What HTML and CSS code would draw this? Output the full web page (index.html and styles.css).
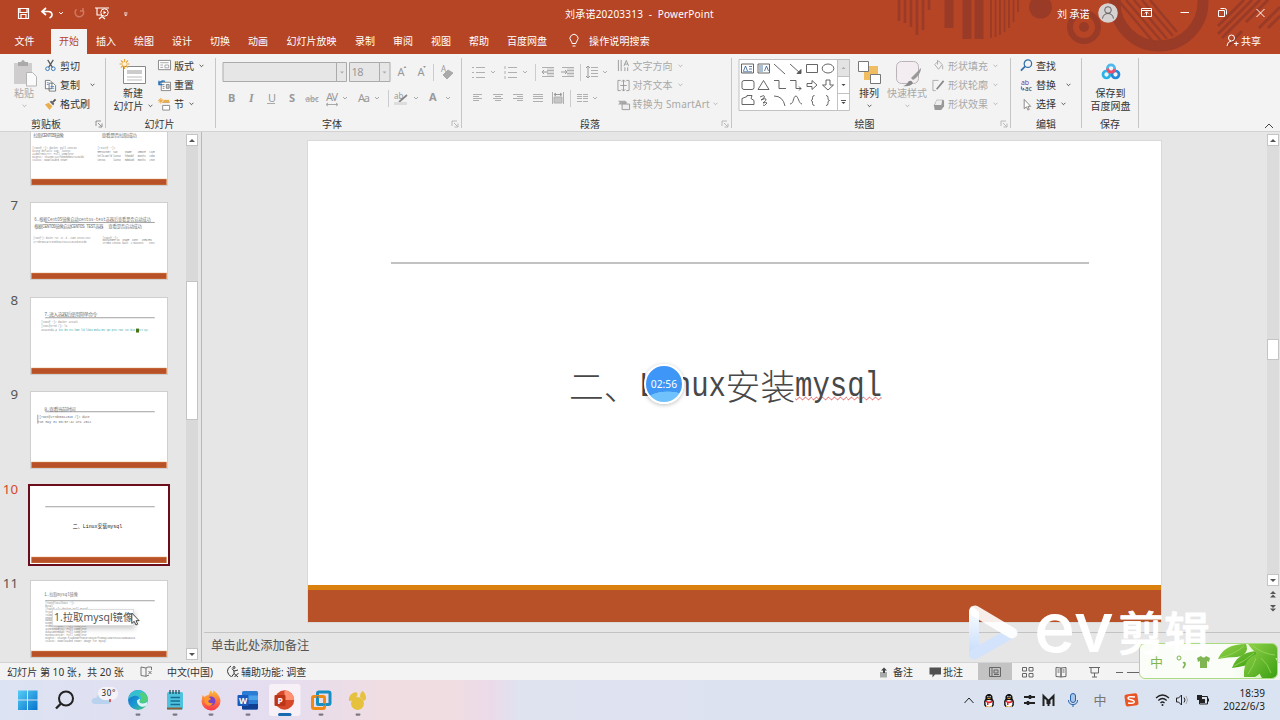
FILE: index.html
```html
<!DOCTYPE html>
<html lang="zh-CN">
<head>
<meta charset="utf-8">
<title>刘承诺20203313 - PowerPoint</title>
<link rel="stylesheet" href="styles.css">
</head>
<body>
<svg class="defs" width="0" height="0">
  <symbol id="chev" viewBox="0 0 5 4"><path d="M.6 .8 2.5 2.7 4.4 .8" fill="none" stroke="currentColor" stroke-width=".8"/></symbol>
  <symbol id="launch" viewBox="0 0 8 8"><path d="M1 6V1h5M3 3l3.500 3.500M7 3.500V7H3.500" fill="none" stroke="currentColor" stroke-width=".8"/></symbol>
  <symbol id="qq" viewBox="0 0 12 14"><path d="M1 9C1 7 2 6.500 2.500 5 2 2 4 .5 6 .5S10 2 9.500 5C10 6.500 11 7 11 9l-1 1-8 0z" fill="#111"/><ellipse cx="6" cy="9.800" rx="3.600" ry="3.300" fill="#fff"/><path d="M2 9.500q-.8 2 1 3.500M10 9.500q.8 2-1 3.500" stroke="#111" stroke-width="1.500" fill="none"/><path d="M2.500 7q3.500 1.800 7 0v1.700q-2 1.200-4 .9v2H4V9q-1-.2-1.500-.6z" fill="#d9252b"/><ellipse cx="6" cy="5" rx="1.800" ry=".6" fill="#f0a020"/><path d="M3 13.200h2.500M6.500 13.200H9" stroke="#e89a20" stroke-width="1"/><circle cx="4.900" cy="3.200" r=".7" fill="#fff"/><circle cx="7.100" cy="3.200" r=".7" fill="#fff"/></symbol>
</svg>
<div class="app">
  <header class="top">
    <svg class="decor" width="400" height="54" viewBox="880 0 400 54">
      <g stroke="#993b26" fill="none">
        <path d="M899 0v21M905 0v23M911 0v27M917 0v35M923 0v30M929 0v10" stroke-width="2.500"/>
        <path d="M949 0v28M967 0v39M979 0v39" stroke-width="9"/>
        <path d="M991 0v38M995.500 0v37M1000 0v35M1004.500 0v32M1009 0v28M1013.500 0v22M1018 0v12" stroke-width="1.800"/>
        <circle cx="1084" cy="27" r="14" stroke-width="6"/>
        <circle cx="1159" cy="2" r="44" stroke-width="11"/>
        <path d="M1118 0l38 45M1126 0l36 42M1134 0l33 39M1142 0l31 36M1150 0l27 32" stroke-width="2.500"/>
        <path d="M1218 26 1244 0M1218 34 1252 0M1222 38 1260 0M1246 22 1268 0M1228 46 1242 31M1259 28 1280 7M1268 28 1280 16" stroke-width="3"/>
      </g>
      <circle cx="1040.500" cy="7" r="11.500" fill="#993b26"/><circle cx="1084" cy="27" r="5" fill="#993b26"/>
    </svg>
    <div class="titlebar">
      <svg class="quick" width="150" height="27" viewBox="0 0 150 27" fill="none" stroke="#fff">
        <path d="M18.500 8.500h10v10h-10zM20 8.500v4h7v-4M21 18.500v-4h5v4" stroke-width="1.200"/>
        <path d="M46 8l-4 3.500 4 3.500M42 11.500h6q4 0 4 3.500 0 2-2.500 3" stroke-width="1.700"/>
        <path d="M59 12l2 2 2-2" stroke-width=".9"/>
        <path d="M82.500 9.500a4.300 4.300 0 1 1-6-.2M83 8v3h-3" stroke="#d07a64" stroke-width="1.400"/>
        <path d="M95 8h14M97 8v7h5M102 15v2M99 19l3-2.500 3 2.500" stroke-width="1.100"/><circle cx="104.500" cy="12.500" r="3.700"/><path d="M103.500 10.800v3.400l2.700-1.700z" fill="#fff" stroke="none"/>
        <path d="M124 13h3.500" stroke-width=".9"/><path d="M124 14.500h3.500l-1.750 1.800z" fill="#fff" stroke="none"/>
      </svg>
      <div class="wintitle">刘承诺20203313&nbsp; -&nbsp; PowerPoint</div>
      <div class="user">刘 承诺</div>
      <svg class="winbtns" width="190" height="27" viewBox="1090 0 190 27" fill="none" stroke="#fff">
        <circle cx="1108" cy="13" r="9.800" fill="#d5d2d1" stroke="none"/><circle cx="1108" cy="10" r="3.300" stroke="#665f5d"/><path d="M1102.500 18.500q1-5 5.500-5t5.500 5" stroke="#665f5d"/>
        <path d="M1141.500 8.500h10v8h-10zM1141.500 10.500h10M1146.500 15.500v-3.500M1144.800 13.500l1.700-1.700 1.700 1.700M1180.500 12.500h8.500"/>
        <path d="M1218.500 10.500h6v6h-6zM1220.500 8.500h4q2 0 2 2v4M1256.500 9l8 8M1264.500 9l-8 8"/>
      </svg>
    </div>
    <nav class="tabs">
      <span class="tab file">文件</span><span class="tab on">开始</span><span class="tab">插入</span><span class="tab">绘图</span><span class="tab">设计</span><span class="tab">切换</span><span class="tab">动画</span><span class="tab w5">幻灯片放映</span><span class="tab">录制</span><span class="tab">审阅</span><span class="tab">视图</span><span class="tab">帮助</span><span class="tab w4">百度网盘</span>
      <svg class="bulb" width="12" height="15" viewBox="0 0 12 15" fill="none" stroke="#fff"><path d="M4 10.500Q4 9 3 8a4 4 0 1 1 6 0q-1 1-1 2.500zM4.500 13h3"/></svg>
      <span class="tell">操作说明搜索</span>
      <span class="share"><svg width="13" height="13" viewBox="0 0 13 13" fill="none" stroke="#fff"><circle cx="5.500" cy="4" r="3"/><path d="M1 12q.5-4.500 4-5M8 9.500h4.500M10.200 7.500v4.500"/></svg>共享</span>
    </nav>
  </header>

  <section class="ribbon">
    <div class="group g1">
      <div class="body">
        <div class="big off"><svg width="26" height="28" viewBox="0 0 26 28"><path d="M3 4h18v21H3z" fill="#cfcdcd"/><path d="M7 3h3q2-4 4 0h3v4H7z" fill="#aaa"/><path d="M15.500 13.500h6l4 4V27h-10z" fill="#fafafa" stroke="#b5b5b5"/></svg><b>粘贴</b><svg class="c"><use href="#chev"/></svg></div>
        <div class="rows">
          <div class="r"><svg class="i" viewBox="0 0 14 14" fill="none"><path d="M4 1l5 8M10 1L5 9" stroke="#555" stroke-width="1.300"/><circle cx="3.800" cy="10.500" r="2" stroke="#2f75b5"/><circle cx="10" cy="10.500" r="2" stroke="#2f75b5"/></svg>剪切</div>
          <div class="r"><svg class="i" viewBox="0 0 14 14" fill="#fff" stroke="#666" stroke-width=".9"><path d="M1.500 1.500h5l2 2v7h-7zM5.500 4.500h4.500l2.500 2.500v6h-7z"/><path d="M7 8h4M7 10h4M3 4h2M3 6h2" stroke="#4b83bd"/></svg>复制<svg class="c far"><use href="#chev"/></svg></div>
          <div class="r"><svg class="i" viewBox="0 0 14 14"><path d="M1 7l4-2 4 4-3 4z" fill="#e9ad4a"/><path d="M6 4l2-1 3 3-1 2z" fill="#666"/><path d="M9.500 4.500L12.500 1.500" stroke="#555" stroke-width="2"/></svg>格式刷</div>
        </div>
      </div>
      <div class="label"><span>剪贴板</span><svg class="l"><use href="#launch"/></svg></div>
    </div>
    <div class="group g2">
      <div class="body">
        <div class="big"><svg width="28" height="28" viewBox="0 0 28 28"><path d="M4.500 7.500h22v17h-22z" fill="#fff" stroke="#888"/><path d="M8 11h15v4H8z" fill="#ccc"/><path d="M8 18h15M8 21h15" stroke="#bbb"/><path d="M5.500 0v10M.5 5h10M2 1.500l7 7M9 1.500l-7 7" stroke="#eaa63c" stroke-width="1.200"/><circle cx="5.500" cy="5" r="2" fill="#fff4d4"/></svg><b>新建</b><b class="two">幻灯片 <svg class="c"><use href="#chev"/></svg></b></div>
        <div class="rows">
          <div class="r"><svg class="i" viewBox="0 0 14 14" fill="#fff" stroke="#777" stroke-width=".9"><path d="M.5 1.500h13v10H.5z"/><path d="M2.500 4h9M2.500 6.500h3M2.500 9h3M7.500 6.500h4v3h-4z" stroke="#999"/></svg>版式<svg class="c"><use href="#chev"/></svg></div>
          <div class="r"><svg class="i" viewBox="0 0 14 14" fill="#fff" stroke="#777" stroke-width=".9"><path d="M3.500 3.500h10v9h-10z"/><path d="M9 6h3v4H9z" fill="#ccc"/><path d="M5 6h2M5 8h2M5 10h2"/><path d="M1 2v4h4M1.300 5.500Q3 1 7.500 2.500" fill="none" stroke="#2f75b5" stroke-width="1.500"/></svg>重置</div>
          <div class="r"><svg class="i" viewBox="0 0 14 14"><path d="M5 4.500h7.500M5 8h7.500v5H5z" fill="#fff" stroke="#888"/><path d="M6 2h6v3H6z" fill="#e9ad4a"/><path d="M3 0v6M0 3h6M1 1l4 4M5 1L1 5" stroke="#eda63c"/></svg>节<svg class="c"><use href="#chev"/></svg></div>
        </div>
      </div>
      <div class="label"><span>幻灯片</span><i></i></div>
    </div>
    <div class="group g3">
      <div class="body col">
        <svg width="245" height="62" viewBox="216 54 245 62" fill="none" stroke="#a9a9a9">
          <path d="M223 62.500h123.500v19H223zM336.500 62.500v19M349.500 62.500h40.500v19h-40.500zM379.500 62.500v19" fill="#e6e6e6" stroke="#ababab"/>
          <path d="M340 71.500h4l-2 2zM382.500 71.500h4l-2 2z" fill="#aaa" stroke="none"/>
          <g stroke="none" fill="#999" class="tx">
            <text x="351.500" y="76" textLength="12">18</text><text x="397.500" y="76">A</text><text x="417.500" y="76">A</text><text x="441" y="72" class="sm">A</text>
            <text x="228" y="102" class="bd">B</text><text x="249" y="102" class="it">I</text><text x="268" y="102">U</text><text x="289" y="102" class="bd">S</text><text x="305.500" y="102" class="sm">abc</text><text x="326" y="101" textLength="12">AV</text><text x="358" y="102" textLength="12">Aa</text><text x="394" y="99" class="sm">ab</text><text x="429" y="101" class="bd">A</text>
          </g>
          <path d="M403.500 68l1.500-2 1.500 2zM423 66h3l-1.500 2z" fill="#999" stroke="none"/>
          <path d="M433.500 64v17M388.500 90v17" stroke="#ccc"/>
          <path d="M443 75l5-5 5 3-6 6z" fill="#aaa"/>
          <path d="M267 103.500h8M305 99h13M326 104.500h12M328 103l-2 1.500 2 1.500M336 103l2 1.500-2 1.500"/><path d="M399 102l8-7" stroke="#888" stroke-width="1.700"/><path d="M394 102h13v3h-13z" fill="#ddd" stroke="none"/>
          <path d="M343 97l2 2 2-2M375 97l2 2 2-2M414 97l2 2 2-2M446 97l2 2 2-2"/>
        </svg>
      </div>
      <div class="label"><span>字体</span><svg class="l off"><use href="#launch"/></svg></div>
    </div>
    <div class="group g4">
      <div class="body">
        <svg width="153" height="62" viewBox="462 54 153 62" fill="none" stroke="#b0b0b0">
          <path d="M476 67.500h9M476 72.500h9M476 77.500h9M472 67.500h2M472 72.500h2M472 77.500h2M508 67.500h9M508 72.500h9M508 77.500h9M505 66v3M505 71v3M505 76v3"/>
          <path d="M491 71l2 2 2-2M523 71l2 2 2-2M603 71l2 2 2-2M593 97l2 2 2-2"/>
          <path d="M535.500 64v17M580.500 64v17M570.500 90v17" stroke="#ccc"/>
          <path d="M547 67h7v10h-7zM567 67h7v10h-7z" fill="#ddd" stroke="none"/>
          <path d="M542 67.500h12M547 70.500h7M547 73.500h7M542 76.500h12M562 67.500h12M567 70.500h7M567 73.500h7M562 76.500h12M591 67.500h7M591 70.500h7M591 73.500h7M591 76.500h7"/>
          <path d="M548 72h-6M544 70l-2 2 2 2M561 72h6M565 70l2 2-2 2M588 66v12M586 68l2-2 2 2M586 76l2 2 2-2" stroke="#999"/>
          <path d="M473 94.500h9M473 96.500h6M473 98.500h9M473 100.500h6M493 94.500h10M495 96.500h6M493 98.500h10M495 100.500h6M513 94.500h10M517 96.500h6M513 98.500h10M517 100.500h6M533 94.500h10M533 96.500h10M533 98.500h10M533 101.500h10M577 94.500h5M577 96.500h5M577 98.500h5M577 101.500h5M583 94.500h5M583 96.500h5M583 98.500h5M583 101.500h5"/>
          <path d="M552.500 92v12M563.500 92v12" /><path d="M554 97h8v6h-8z" fill="#c6c6c6"/><path d="M554 94.500h8M556 93l-2 1.500 2 1.500M560 93l2 1.500-2 1.500" stroke="#999"/>
        </svg>
        <div class="rows off">
          <div class="r"><svg class="i" viewBox="0 0 14 14" fill="none" stroke="#999"><path d="M1.500 1v12M4.500 1v12M8.500 9v4M11.500 9v4M7.500 7.500l2.500-6 2.500 6M8.500 5.500h3"/></svg>文字方向<svg class="c"><use href="#chev"/></svg></div>
          <div class="r"><svg class="i" viewBox="0 0 14 14" fill="none" stroke="#999"><path d="M4 1.500H1v11h3M10 1.500h3v11h-3M3.500 7h7M7 1v12M5 3l2-2 2 2M5 11l2 2 2-2"/></svg>对齐文本<svg class="c"><use href="#chev"/></svg></div>
          <div class="r"><svg class="i" viewBox="0 0 14 14"><path d="M1 3h8l2 2-2 2H1l2-2z" fill="#aaa"/><path d="M5.500 6.500h8v6h-8z" fill="#eee" stroke="#999"/></svg><span class="smart">转换为 SmartArt</span><svg class="c near"><use href="#chev"/></svg></div>
        </div>
      </div>
      <div class="label"><span>段落</span><svg class="l off"><use href="#launch"/></svg></div>
    </div>
    <div class="group g5">
      <div class="body">
        <svg width="118" height="62" viewBox="732 54 118 62" fill="none" stroke="#555" stroke-width=".9">
          <path d="M739 59.500h110.500v51H739z" fill="#fff" stroke="#bbb"/><path d="M837.500 59.500h12v17h-12zM837.500 93.500h12" fill="#e3e3e3" stroke="#bbb"/><path d="M837.500 76v34" stroke="#bbb"/>
          <path d="M841.500 69h4l-2-2z" fill="#aaa" stroke="none"/><path d="M841.500 84h4l-2 2zM841.500 102h4l-2 2z" fill="#444" stroke="none"/><path d="M841 100.500h5" stroke="#444"/>
          <path d="M741.500 64h12v9h-12zM758 64h11.500v9H758zM774 64l11 10M790 64l10 9M806.500 64.500h11v8h-11z"/><path d="M797 73.500h4v-4z" fill="#555"/>
          <path d="M743.500 71l2-5 2 5M749 66.500h3M749 69h3M743 71.800h9M760 65v7M762 65v7M764.500 71l2-5 2 5" stroke="#315d8e" stroke-width=".8"/>
          <ellipse cx="828" cy="68.500" rx="5.800" ry="4.500"/><rect x="742" y="80.500" width="12" height="9" rx="2"/>
          <path d="M758 89.500l5.500-9 5.500 9zM774 80.500h5v8h7M790 80.500h6v8h5M799 86.500l2 2-2 2M807 83.500h5v-3l5 4.500-5 4.500v-3h-5zM826 80v5h-3.500l5.500 5 5.500-5H830v-5z"/>
          <path d="M742 104.500v-6l5-2v-1h5l-1 3 3 2v4zM760 97q6-3 4 1l-3 2q4-2 5-1t-3 4q3-1 4 0-3 4-4 2M774 96q9 0 11 10M790 104c4 0 3-8 6-8 2 0 3 8 6 8"/>
          <path d="M814.500 95.500q-2 0-2 2v2l-1.500 1 1.500 1v2q0 2 2 2M826 95.500q2 0 2 2v2l1.500 1-1.500 1v2q0 2-2 2"/>
        </svg>
        <div class="big arr"><svg width="26" height="28" viewBox="0 0 26 28"><path d="M8 7h14v14H8z" fill="#f0be60"/><path d="M2.500 2.500h10v10h-10zM14.500 15.500h10v9h-10z" fill="#fff" stroke="#777"/></svg><b>排列</b><svg class="c"><use href="#chev"/></svg></div>
        <div class="big off qs"><svg width="28" height="28" viewBox="0 0 28 28"><rect x="3.500" y="2.500" width="22" height="22" rx="5" fill="#f3ecf1" stroke="#bcb3ba"/><path d="M28 9l-10 10 2 2q7-4 8-11z" fill="#999"/><path d="M10 27q4-1 5-4 3-3 5 1-3 4-10 3" fill="#888"/></svg><b>快速样式</b><svg class="c"><use href="#chev"/></svg></div>
        <div class="rows off">
          <div class="r"><svg class="i" viewBox="0 0 14 14" fill="none" stroke="#aaa"><path d="M3 6l4-4 4 4-4 5zM6 1v5M11.500 7v4" /></svg>形状填充<svg class="c"><use href="#chev"/></svg></div>
          <div class="r"><svg class="i" viewBox="0 0 14 14" fill="none" stroke="#aaa"><path d="M7 1.500H1v11h3"/><path d="M5 11l7.500-9" stroke="#888" stroke-width="1.800"/></svg>形状轮廓<svg class="c"><use href="#chev"/></svg></div>
          <div class="r"><svg class="i" viewBox="0 0 14 14"><path d="M2 8l3-6h7l1 1v6l-3 4H3z" fill="#999"/><path d="M5 2.500h6l-1 5H3z" fill="#eee"/></svg>形状效果<svg class="c"><use href="#chev"/></svg></div>
        </div>
      </div>
      <div class="label"><span>绘图</span><svg class="l off"><use href="#launch"/></svg></div>
    </div>
    <div class="group g6">
      <div class="body"><div class="rows">
        <div class="r"><svg class="i" viewBox="0 0 14 14" fill="none" stroke="#2f6da8"><circle cx="8.500" cy="5" r="4" stroke-width="1.300"/><path d="M5.500 8L1 12.500" stroke-width="1.800"/></svg>查找</div>
        <div class="r"><svg class="i" viewBox="0 0 14 14"><text x="1" y="6" font-size="7.500" fill="#7b3f98">ab</text><text x="5.500" y="12.500" font-size="7" fill="#333">ac</text><path d="M1.500 8v3h3M3 9.500L4.500 11 3 12.500" fill="none" stroke="#2f6da8"/></svg>替换<svg class="c far"><use href="#chev"/></svg></div>
        <div class="r"><svg class="i" viewBox="0 0 14 14"><path d="M4.500 1.500v10L7 9.500l1.500 3.500 1.500-.7L8.500 9h3z" fill="#fff" stroke="#777" stroke-width=".9"/></svg>选择<svg class="c"><use href="#chev"/></svg></div>
      </div></div>
      <div class="label"><span>编辑</span><i></i></div>
    </div>
    <div class="group g7">
      <div class="body"><div class="big"><svg width="20" height="28" viewBox="0 0 20 28" fill="none" stroke-width="2.700"><circle cx="5.500" cy="15.500" r="3.500" stroke="#29b4e8"/><circle cx="14.500" cy="15.500" r="3.500" stroke="#2388d9"/><circle cx="10" cy="9.500" r="3.700" stroke="#4eb9ec"/><path d="M6.500 9.500Q7 13 10 13.200T13.500 10" stroke="#ef4d67"/></svg><b>保存到</b><b class="two">百度网盘</b></div></div>
      <div class="label"><span>保存</span><i></i></div>
    </div>
    <svg class="fold" width="10" height="6" viewBox="0 0 10 6"><path d="M1 5l4-4 4 4" fill="none" stroke="#444"/></svg>
  </section>

  <main class="work">
    <aside class="panel">
      <div class="thumbs">
        <div class="t"><span></span><svg class="s" viewBox="0 0 137 77"><g class="sim"><text x="2" y="28" font-size="5" textLength="31">拉取CENTOS镜像</text><text x="71" y="28" font-size="5" textLength="36">查看是否拉取成功</text></g><g class="mono"><text x="1" y="41">[root@ ~]# docker pull centos</text><text x="1" y="44">Using default tag: latest</text><text x="1" y="47">a1d0c7532777: Pull complete</text><text x="1" y="50" textLength="52">Digest: sha256:a27fd8080b517143cbb</text><text x="1" y="53" textLength="36">Status: Downloaded newer</text><text x="67" y="41" textLength="18">[root@ ~]#</text><text x="67" y="45" textLength="58">REPOSITORY  TAG      IMAGE     CREATE   SIZE</text><text x="67" y="49" textLength="58">hello-world latest   feb5d9f   months   13kB</text><text x="67" y="53" textLength="58">centos      latest   5d0da3d   months   231M</text></g><path class="bar" d="M0 71h137v6H0z"/></svg></div>
        <div class="t"><span>7</span><svg class="s" viewBox="0 0 137 77"><g class="sim"><text x="3" y="18" font-size="5" textLength="118" lengthAdjust="spacingAndGlyphs">6.根据CentOS镜像启动centos-test容器后查看是否启动成功</text><text x="3" y="25.500" font-size="4.500" textLength="70">根据CENTOS镜像启动CENTOS TEST容器</text><text x="78" y="25.500" font-size="4.500" textLength="34">查看是否启动成功</text></g><path d="M14 19.700h111" class="ln"/><g class="mono"><text x="2" y="36.500" textLength="58" lengthAdjust="spacingAndGlyphs">[root@~]# docker run -it -d --name centos-test</text><text x="2" y="41" textLength="54">277de6619723ed3847ea2c1028b81ed6</text><text x="72" y="36">[root@ ~]#</text><text x="72" y="39" textLength="50">CONTAINER ID  IMAGE  COMM   CREATED</text><text x="72" y="42" textLength="53">277d66 centos bash  2 minutes    cent</text></g><path class="bar" d="M0 71h137v6H0z"/></svg></div>
        <div class="t"><span>8</span><svg class="s" viewBox="0 0 137 77"><text class="sim" x="13" y="18.500" font-size="5" textLength="54">7.进入容器后使用简单命令</text><path d="M14 20h111" class="ln"/><g class="mono"><text x="10" y="25.500" textLength="37">[root@ ~]# docker attach</text><text x="10" y="29">[root@277d /]# ls</text><text x="10" y="33.500" textLength="16">anaconda-p</text><text x="28" y="33.500" fill="#26a9ad" textLength="90" lengthAdjust="spacingAndGlyphs">bin dev etc home lib lib64 media mnt opt proc root run sbin   srv sys</text></g><path d="M106 31h3v4h-3z" fill="#477414"/><path class="bar" d="M0 71h137v6H0z"/></svg></div>
        <div class="t"><span>9</span><svg class="s" viewBox="0 0 137 77"><text class="sim" x="13" y="19" font-size="5" textLength="32">8.查看当前时间</text><path d="M14 20h111" class="ln"/><g class="mono m4"><text x="8" y="26.500" textLength="51" lengthAdjust="spacingAndGlyphs">[root@277de6612346 /]# date</text><text x="6.500" y="31.500" textLength="54" lengthAdjust="spacingAndGlyphs">Tue May 31 08:57:42 UTC 2022</text></g><path d="M6.500 23v9" class="ln"/><path class="bar" d="M0 71h137v6H0z"/></svg></div>
        <div class="t sel"><span>10</span><svg class="s" viewBox="0 0 137 77"><path d="M14 20h111" class="ln"/><text class="sim dk" x="42" y="41.500" font-size="5.500" textLength="50" lengthAdjust="spacingAndGlyphs">二、Linux安装mysql</text><path class="bar" d="M0 71h137v6H0z"/></svg></div>
        <div class="t"><span>11</span><svg class="s" viewBox="0 0 137 77"><text class="sim" x="13" y="15.500" font-size="5" textLength="34" lengthAdjust="spacingAndGlyphs">1.拉取mysql镜像</text><path d="M14 20h111" class="ln"/><g class="mono"><text x="14" y="23">[root@localhost ~]#</text><text x="14" y="26">mysql</text><text x="14" y="29">[root@ ~]# docker pull mysql</text><text x="14" y="32">Trying</text><text x="14" y="35">72a690</text><text x="14" y="38">93619d</text><text x="14" y="41">99da31</text><text x="14" y="44">626033</text><text x="14" y="47">37d5d7efb64e: Pull complete</text><text x="14" y="50">ac563158d721: Pull complete</text><text x="14" y="53">d2ba16033dad: Pull complete</text><text x="14" y="56">0ceb82207cd7: Pull complete</text><text x="14" y="59" textLength="91">Digest: sha256:f2ad209efe9c67104167fc609cca6973c8422939491c9</text><text x="14" y="62" textLength="62">Status: Downloaded newer image for mysql</text></g><path class="bar" d="M0 71h137v6H0z"/></svg></div>
      </div>
      <div class="sb left"><i class="up"></i><i class="thumb"></i><i class="dn"></i></div>
    </aside>
    <section class="edit">
      <div class="stage">
        <div class="slide">
          <div class="rule"></div>
          <h1><span class="cj">二、</span><span class="la"><em>Linux</em></span><span class="cj">安装</span><span class="la sp"><em>mysql</em></span></h1>
          <div class="foot"></div>
        </div>
        <div class="sb right"><i class="up"></i><i class="thumb"></i><i class="dn"></i><svg width="12" height="30" viewBox="0 0 12 30" fill="#555"><path d="M3 8h6L6 5zM3 11.500h6l-3-3zM3 19h6l-3 3zM3 22.500h6l-3 3z"/></svg></div>
      </div>
      <div class="notes">单击此处添加备注</div>
    </section>
  </main>

  <footer class="status">
    <span class="s1">幻灯片 第 10 张，共 20 张</span>
    <svg class="s2" width="13" height="12" viewBox="0 0 13 12" fill="none" stroke="#666" stroke-width=".9"><path d="M6 2L1 1v8.500l5 .8zM6 2l2-1h3.500v3M6 10.300l2-1h1M8.500 5l3 3M11.500 5l-3 3"/></svg>
    <span class="s3">中文(中国)</span>
    <svg class="s4" width="14" height="13" viewBox="0 0 14 13" fill="none" stroke="#333"><path d="M5 1Q1 3 1.500 6.500 2 10 5 11.500M6 3.500l2 2.500 4-1M8 6v2.500L5.500 12M8 8.500l4 3.500M12.500 8l-4 4"/><circle cx="8" cy="2.500" r="1"/></svg>
    <span class="s5">辅助功能: 调查</span>
    <svg class="s6" width="10" height="12" viewBox="0 0 10 12"><path d="M1 6h7v5.500H1z" fill="#aaa"/><path d="M2 4.500L5 1.500l3 3zM4 4h2v3H4z" fill="#444"/></svg><span>备注</span>
    <svg class="s7" width="13" height="12" viewBox="0 0 13 12"><path d="M.5 1.500h11.500v7H6l-2.500 3v-3h-3z" fill="#505050"/></svg><span>批注</span>
    <svg class="views" width="290" height="18" viewBox="979 662 290 18" fill="none" stroke="#666"><path d="M979 662h34v18h-34z" fill="#c3c3c3" stroke="none"/><path d="M990.500 666.500h11v9h-11zM993 667v8M995 669h4v3h-4zM995 673.500h5" /><path d="M1023.500 666.500h4v3.500h-4zM1030 666.500h4v3.500h-4zM1023.500 672.500h4v3.500h-4zM1030 672.500h4v3.500h-4zM1062 667l-5-.5v9l5 .5zM1062 667l5-.5v9l-5 .5zM1058.500 669h2M1058.500 671h2M1063.500 669h2M1063.500 671h2M1090 666.500h11M1092 667v5h7.500v-5M1095.500 672v4M1093 676h5M1117 671.500h7M1128 671.500h25"/></svg>
  </footer>

  <footer class="taskbar">
    <svg width="960" height="40" viewBox="0 680 960 40">
      <defs><linearGradient id="w" x2="1" y2="1"><stop stop-color="#55cdf5"/><stop offset="1" stop-color="#0873cd"/></linearGradient><linearGradient id="e" x2="1" y2="1"><stop stop-color="#1769bd"/><stop offset=".5" stop-color="#1897d5"/><stop offset="1" stop-color="#50cf70"/></linearGradient><linearGradient id="f" x2="0" y2="1"><stop stop-color="#ffbd34"/><stop offset="1" stop-color="#f9374d"/></linearGradient></defs>
      <path d="M18 690.500h9v9h-9zM28 690.500h9.500v9H28zM18 700.500h9v9.500h-9zM28 700.500h9.500v9.500H28z" fill="url(#w)"/>
      <circle cx="66" cy="698.500" r="7" fill="none" stroke="#222" stroke-width="2"/><path d="M61 703.500l-5 5" stroke="#222" stroke-width="2.300"/>
      <path d="M94 704q-4-2-1.500-5 2-2 4-1 1-5 6-4t5 5q4 0 3.500 3-.5 2-3 2z" fill="#b9d2ed"/><rect x="98" y="687" width="20" height="13" rx="6.500" fill="#f6f3f8"/><text x="101.500" y="696" font-size="8" textLength="14" fill="#222">30°</text><path d="M110 699v3" stroke="#d33" stroke-width="1.500"/>
      <circle cx="138" cy="700" r="10" fill="url(#e)"/><path d="M128 700a10 10 0 0 1 19.500-3q1.500 6-4.500 6.500-4 0-3.500-2.500 1-1.500 0-3-2-3-6-2-4 1-5.500 4" fill="#35bfd0"/><path d="M147.800 698q.7 5-4.800 5.500-4 0-3.500-2.500.8-1 .4-2.500l-3 2q0 4 4 6 4 1 6-1.500z" fill="#dff4f7"/><path d="M142 692q5 2 5.500 6 0 5-5 5-3 0-2.500-2 3-4-1-7z" fill="#4fce7b"/>
      <rect x="167" y="692" width="16" height="17.500" rx="1.500" fill="#4fc3de"/><path d="M167 708.500h15" stroke="#8b5e3c" stroke-width="2"/><path d="M170 690v4M173 690v4M176 690v4M179 690v4" stroke="#234a5a" stroke-width="1.300"/><path d="M170.500 697.500h9.500M170.500 701h9.500M170.500 704.500h9.500" stroke="#176e94" stroke-width="1.300"/>
      <path d="M202.500 695l2 2q2-2 4-2l2-4.500q1.500 1 2 3l1-3q6 4 7 10a9.500 9.500 0 1 1-19 1z" fill="url(#f)"/><circle cx="211" cy="701" r="4.500" fill="#7b43c7"/><path d="M205 697q4-1 6 2l-3 2q1 3 5 2-2 4-6 2-4-3-2-8" fill="#ff9829"/>
      <rect x="242" y="691" width="16" height="18.500" rx="1.500" fill="#2b7cd3"/><path d="M242 695.500h16v4.500h-16z" fill="#4ba2e9"/><path d="M242 704h16v4q0 1.500-1.500 1.500H243q-1 0-1-1.500z" fill="#103f91"/><rect x="237.500" y="695" width="11" height="11" rx="1" fill="#185abd"/><text x="239" y="703.500" font-size="8.500" font-weight="700" textLength="8" fill="#fff">W</text>
      <rect x="269" y="684" width="31.500" height="32" rx="3" fill="#f7f1f7"/><circle cx="284.500" cy="700" r="9.700" fill="#d5482a"/><path d="M284.500 690.300a9.700 9.700 0 0 1 9.700 9.700h-9.700z" fill="#ff9173"/><rect x="274.500" y="695" width="11" height="11" rx="1" fill="#bc3519"/><text x="277.500" y="703.500" font-size="8.500" font-weight="700" fill="#fff">P</text>
      <rect x="317.500" y="692" width="12.500" height="12.500" rx="1.500" fill="none" stroke="#168ec2" stroke-width="3"/><rect x="312.500" y="696.500" width="12" height="12" rx="1.500" fill="none" stroke="#ef8b14" stroke-width="3"/><path d="M317.500 696v8.500h8" fill="none" stroke="#168ec2" stroke-width="2"/>
      <circle cx="357.500" cy="703.500" r="6.500" fill="#e6c13e"/><path d="M349 701q-1-7 7-9l1.500 1.500q0 4-5 7zM360 697q0-5 3-6 3 3 3 8l-2 2z" fill="#e6c13e"/>
      <g fill="#7d7884"><rect x="135.500" y="713.500" width="5" height="2.200" rx="1.100"/><rect x="172.500" y="713.500" width="5" height="2.200" rx="1.100"/><rect x="208.500" y="713.500" width="5" height="2.200" rx="1.100"/><rect x="245.500" y="713.500" width="5" height="2.200" rx="1.100"/><rect x="318.500" y="713.500" width="5" height="2.200" rx="1.100"/><rect x="355.500" y="713.500" width="5" height="2.200" rx="1.100"/></g><rect x="278" y="713" width="13.500" height="3" rx="1.500" fill="#1668af"/>
    </svg>
    <svg width="255" height="40" viewBox="960 680 255 40" fill="none" stroke="#222">
      <path d="M964.500 703l4.500-5 4.500 5"/>
      <use href="#qq" x="983" y="693.500" width="12" height="14" stroke="none"/><use href="#qq" x="1003" y="693.500" width="12" height="14" stroke="none"/>
      <path d="M1024 697h11M1024 703h11" stroke-width="2"/><path d="M1030 695v4M1028 701v4" stroke-width="2.500"/>
      <path d="M1043.500 706v-10l4 4v4M1053.500 706v-10l-4 4v4M1048.500 700v6" stroke-width="2"/>
      <rect x="1070.500" y="693.500" width="5" height="9" rx="2.500" fill="#a9c6ea" stroke="#2860a8"/><path d="M1068.500 700q0 4.500 4.500 4.500t4.500-4.500M1073 704.500v2.500" stroke="#2860a8"/>
      <text x="1093.500" y="704.500" font-size="13" fill="#777" stroke="none">中</text>
      <rect x="1125" y="694" width="13" height="12" rx="2" fill="#e95524" stroke="none" transform="rotate(-8 1131 700)"/><path d="M1135 697q-7-1-7 1 0 1.500 4 2 3 1 2 2.500-1 1.200-6 .5" stroke="#fff" stroke-width="1.500"/>
      <path d="M1156 698q6.500-6 13 0M1158.300 700.500q4.200-4 8.400 0M1160.500 703q2-2 4 0" stroke-width="1.200"/><circle cx="1162.500" cy="705" r="1" fill="#222" stroke="none"/>
      <path d="M1176.500 698v4h2l3 3v-10l-3 3zM1184 697.500q2 2.500 0 5"/><path d="M1186 696q3 4 0 8" stroke="#aaa"/>
      <path d="M1199.500 696.500h8v7.500h-8zM1208.500 698.500v3"/><path d="M1200 699h5v4h-5zM1197 695h5v5h-5z" fill="#222" stroke="none"/>
    </svg>
    <div class="clock">18:39<br>2022/6/3</div>
  </footer>

  <div class="timer">02:56</div>
  <div class="tip">1.拉取mysql镜像</div>
  <svg class="cursor" width="9" height="14" viewBox="0 0 9 14"><path d="M.8 1v10.500L3.200 9.300 5 13l1.700-.8L5 8.700h3.200z" fill="#fff" stroke="#333" stroke-width=".9"/></svg>
  <div class="ime"><svg width="137" height="34" viewBox="0 0 137 34">
    <defs><linearGradient id="lf" x2="1" y2="1"><stop stop-color="#94d44b"/><stop offset="1" stop-color="#3c9f12"/></linearGradient><linearGradient id="bg" x2="1"><stop stop-color="#fff" stop-opacity="0"/><stop offset="1" stop-color="#b5e58a"/></linearGradient></defs>
    <path d="M85 0h52v34H85z" fill="url(#bg)"/>
    <path d="M78 15Q84 0 106 0q4 10-9 13-9 0-19 2zM92 24q5-15 24-17 5 14-24 17z" fill="url(#lf)"/><path d="M108 0h29v14q-18 2-29-14zM104 33q-1-19 13-23 13 14-2 23zM116 9q17 0 21 8v17h-15q-6-8-6-25z" fill="url(#lf)"/><path d="M80 14q15-4 24-12M94 22q10-4 20-13M113 2q10 8 22 9M108 30q6-9 8-16M121 14q7 6 10 15" stroke="#a5da68" stroke-width=".7" fill="none"/>
    <text x="10" y="22.500" font-size="13" fill="#7fb653">中</text><circle cx="39" cy="14" r="2" fill="none" stroke="#7fb653"/><path d="M43 19q2-1 2 1 0 2-2 4" fill="none" stroke="#7fb653" stroke-width="1.800"/><path d="M57 14l4-2q3 3 5 0l4 2-1 4-2-1v7h-7v-7l-2 1z" fill="#7fb653"/>
  </svg></div>
  <svg class="wm" width="260" height="66" viewBox="960 600 260 66">
    <defs><linearGradient id="b1" x2="0" y2="1"><stop stop-color="#fff"/><stop offset="1" stop-color="#c3dafb"/></linearGradient></defs>
    <path d="M969 611q0-3 3-5l7 6v36l-10 9z" fill="url(#b1)"/>
    <path d="M974.500 654l37-21" stroke="#d3e3fb" stroke-width="11" stroke-linecap="round"/><path d="M975 611l37 22" stroke="#fff" stroke-opacity=".9" stroke-width="11" stroke-linecap="round"/>
    <text class="ev" x="1034" y="652" textLength="80" lengthAdjust="spacingAndGlyphs">ev</text><text class="jj" x="1118" y="650" textLength="92">剪辑</text>
  </svg>
</div>
</body>
</html>
```

FILE: styles.css
```css
* { box-sizing: border-box; }
body { margin: 0; font: 10px/12px "Noto Sans", "Noto Sans CJK SC", sans-serif; color: #333; }
svg { display: block; flex: none; }
.defs { position: absolute; }
.app { position: relative; width: 1280px; height: 720px; overflow: hidden; display: flex; flex-direction: column; background: #e6e6e6; }

.top { position: relative; height: 54px; background: #b64526; color: #fff; flex: none; }
.decor { position: absolute; right: 0; top: 0; }
.titlebar { position: relative; height: 27px; display: flex; align-items: center; }
.wintitle { margin-left: 415px; width: 200px; letter-spacing: .21px; white-space: nowrap; }
.user { margin-left: 292px; width: 33px; white-space: nowrap; }
.tabs { position: relative; height: 27px; display: flex; align-items: center; }
.tab { width: 38px; height: 25px; line-height: 25px; margin-top: 2px; text-align: center; flex: none; }
.tab.file { width: 49px; margin-right: 2px; }
.tab.on { width: 36px; background: #f3f3f3; color: #b64526; }
.tab.w5 { width: 69px; }
.tab.w4 { width: 58px; }
.bulb { margin-left: 12px; }
.tell { margin-left: 9px; letter-spacing: .15px; }
.share { margin-left: auto; margin-right: 19px; display: flex; align-items: center; gap: 2px; }

.ribbon { position: relative; height: 78px; flex: none; display: flex; background: #f3f3f3; border-bottom: 1px solid #d2d2d2; }
.group { display: flex; flex-direction: column; position: relative; flex: none; }
.group::after { content: ""; position: absolute; right: 0; top: 4px; height: 70px; width: 1px; background: #c6c6c6; }
.g1 { width: 106px; }
.g2 { width: 110px; }
.g3 { width: 246px; }
.g4 { width: 270px; }
.g5 { width: 279px; }
.g6 { width: 71px; }
.g7 { width: 57px; }
.body { height: 62px; display: flex; }
.label { display: flex; height: 15px; align-items: center; }
.label span { flex: 1; text-align: center; padding-right: 3px; }
.g6 span, .g7 span { padding-right: 1px; }
.label i { width: 0; }
.l { width: 8px; height: 8px; color: #777; margin-right: 3px; }
.off { color: #a8a8a8; }
.big { display: flex; flex-direction: column; align-items: center; padding-top: 5px; white-space: nowrap; }
.big b { font-weight: 400; line-height: 12.500px; }
.big .two { display: flex; gap: 4px; align-items: center; }
.big > .c { margin-top: 4px; }
.c { width: 5px; height: 4px; margin-left: 5px; }
.big .c { margin-left: 0; }
.c.far { margin-left: 10px; }
.c.near { margin-left: 3px; }
.rows { padding-top: 2px; }
.r { height: 19.400px; display: flex; align-items: center; white-space: nowrap; }
.i { width: 13px; height: 13px; margin-right: 3px; overflow: visible; }
.g1 .big { width: 28px; margin-left: 10px; }
.g1 .rows { margin-left: 6px; }
.g2 .big { width: 38px; margin-left: 8px; }
.g2 .rows { margin-left: 6px; }
.g4 .rows { margin-left: 1.500px; }
.g5 .arr { width: 22px; margin-left: 8px; }
.g5 .qs { width: 42px; margin-left: 6px; }
.g5 .rows { margin-left: 4px; }
.g6 .rows { margin-left: 9px; }
.g7 .big { width: 57px; }
.smart { letter-spacing: .2px; }
.tx { font-size: 11px; }
.bd { font-weight: 700; }
.sm { font-size: 8px; }
.it { font-style: italic; font-family: "Liberation Serif", serif; font-size: 12px; font-weight: 700; }
.fold { position: absolute; right: 6px; bottom: 2px; }

.work { height: 530px; flex: none; display: flex; overflow: hidden; }
.panel { width: 202px; display: flex; border-right: 1px solid #b9b9b9; overflow: hidden; }
.thumbs { width: 186px; margin-top: -24.500px; }
.t { height: 94.600px; display: flex; }
.t span { width: 18px; margin-right: 12px; text-align: right; font-size: 13.300px; line-height: 7px; color: #555; }
.t .s { width: 138px; height: 78px; background: #fff; border: 1px solid #cfcfcf; }
.t.sel span { color: #d04a2b; }
.t.sel .s { outline: 2px solid #6b0d1b; outline-offset: -.5px; border-color: #fff; }
.bar { fill: #b85127; stroke: #df9a5a; stroke-width: .5; }
.ln { stroke: #888; stroke-width: .8; }
.sim { fill: #777; font-family: "Liberation Mono", "Noto Sans CJK SC", monospace; }
.dk { fill: #222; }
.mono { font: 2.600px "Liberation Mono", monospace; fill: #888; }
.mono text { white-space: pre; }
.m4 { font-size: 4.300px; fill: #666; }
.sb { width: 12px; display: flex; flex-direction: column; background: #d9d9d9; }
.sb i { display: block; background: #fff; border: 1px solid #c4c4c4; flex: none; }
.sb .up, .sb .dn { height: 12px; display: flex; align-items: center; justify-content: center; }
.sb .up::after { content: ""; border: 3px solid transparent; border-top: 0; border-bottom: 3px solid #555; }
.sb .dn::after { content: ""; border: 3px solid transparent; border-bottom: 0; border-top: 3px solid #555; }
.left { margin-top: 2px; height: 526px; }
.left .thumb { height: 139px; margin-top: 135px; }
.left .dn { margin-top: auto; }
.right { margin-left: auto; margin-right: 1px; margin-top: 2px; background: linear-gradient(#dcdcdc 452px, transparent 0); }
.right .thumb { height: 21px; margin-top: 193px; }
.right .dn { margin-top: 214px; }
.edit { flex: 1; display: flex; flex-direction: column; padding-left: 2px; }
.stage { height: 501px; display: flex; border-bottom: 1px solid #c3c3c3; }
.slide { width: 853px; height: 481px; margin: 9px 0 0 104px; background: #fff; outline: 1px solid #d9d9d9; display: flex; flex-direction: column; }
.rule { width: 698px; height: 2px; background: #c2c2c2; margin: 121px 0 0 83px; flex: none; }
h1 { margin: 98px 0 0 261px; height: 50px; width: 314px; display: flex; font-weight: 400; font-size: 34.800px; line-height: 50px; color: #484848; }
.cj { font-family: "Noto Sans CJK SC", sans-serif; font-weight: 300; width: 69.600px; line-height: 46px; }
.la { width: 87px; font-family: "Liberation Mono", monospace; }
.la em { font-style: normal; display: inline-block; transform: scaleX(.833); transform-origin: 0 50%; }
.sp em { text-decoration: underline wavy #e05252 .6px; text-decoration-skip-ink: none; text-underline-offset: 0; }
.foot { margin-top: auto; width: 853px; height: 37px; background: #b85127; border-top: 5px solid #d9800f; }
.notes { padding: 5px 0 0 7px; font-size: 12.300px; line-height: 16px; color: #555; }

.status { height: 18px; flex: none; display: flex; align-items: center; background: #f3f3f3; white-space: nowrap; border-top: 1px solid #d4d4d4; }
.s1 { margin-left: 7px; width: 133px; font-size: 10.100px; }
.s3 { margin-left: 14px; width: 47px; }
.s4 { margin-left: 12px; }
.s5 { margin-left: 1px; width: 66px; }
.s6 { margin-left: 572px; margin-right: 4px; }
.s7 { margin-left: 16px; margin-right: 1px; }
.views { margin-left: 15px; }
.taskbar { height: 40px; flex: none; display: flex; background: linear-gradient(90deg, #dce3f2 0, #e0e0f1 120px, #e5ddef 280px, #f0dde2 385px, #f0dde2 455px, #ebdae9 490px, #dfe3f0 520px, #dde2f0 850px, #d9e3f1 1280px); }
.clock { margin-left: auto; margin-right: 15px; padding-top: 7px; text-align: right; line-height: 13px; color: #222; }

.timer { position: absolute; left: 644px; top: 364px; width: 40px; height: 40px; border-radius: 50%; border: 2px solid #fff; box-shadow: 0 1px 4px #0004; background: radial-gradient(ellipse 22px 10px at 60% 98%, #6fc2fb 96%, transparent), linear-gradient(135deg, #3d95fb, #3f97f0); color: #fff; text-align: center; font-size: 10.300px; line-height: 36px; }
.tip { position: absolute; left: 52px; top: 609px; width: 82px; height: 17px; padding-left: 1px; background: #fff; border: 1px solid #ddd; box-shadow: 1px 3px 5px #0003; font-size: 10.400px; line-height: 15px; color: #555; white-space: nowrap; }
.cursor { position: absolute; left: 131px; top: 612px; }
.wm { position: absolute; left: 960px; top: 600px; fill: #fff; overflow: visible; }
.ev { font: 500 69px Inter, sans-serif; }
.jj { font: 500 46px "Noto Sans CJK SC", sans-serif; stroke: #fff; stroke-width: .8px; stroke-linejoin: round; }
.ime { position: absolute; left: 1139px; top: 643px; width: 139px; height: 36px; border: 1px solid #a8dc83; border-radius: 6px; background: #fbfef8; overflow: hidden; }
```
